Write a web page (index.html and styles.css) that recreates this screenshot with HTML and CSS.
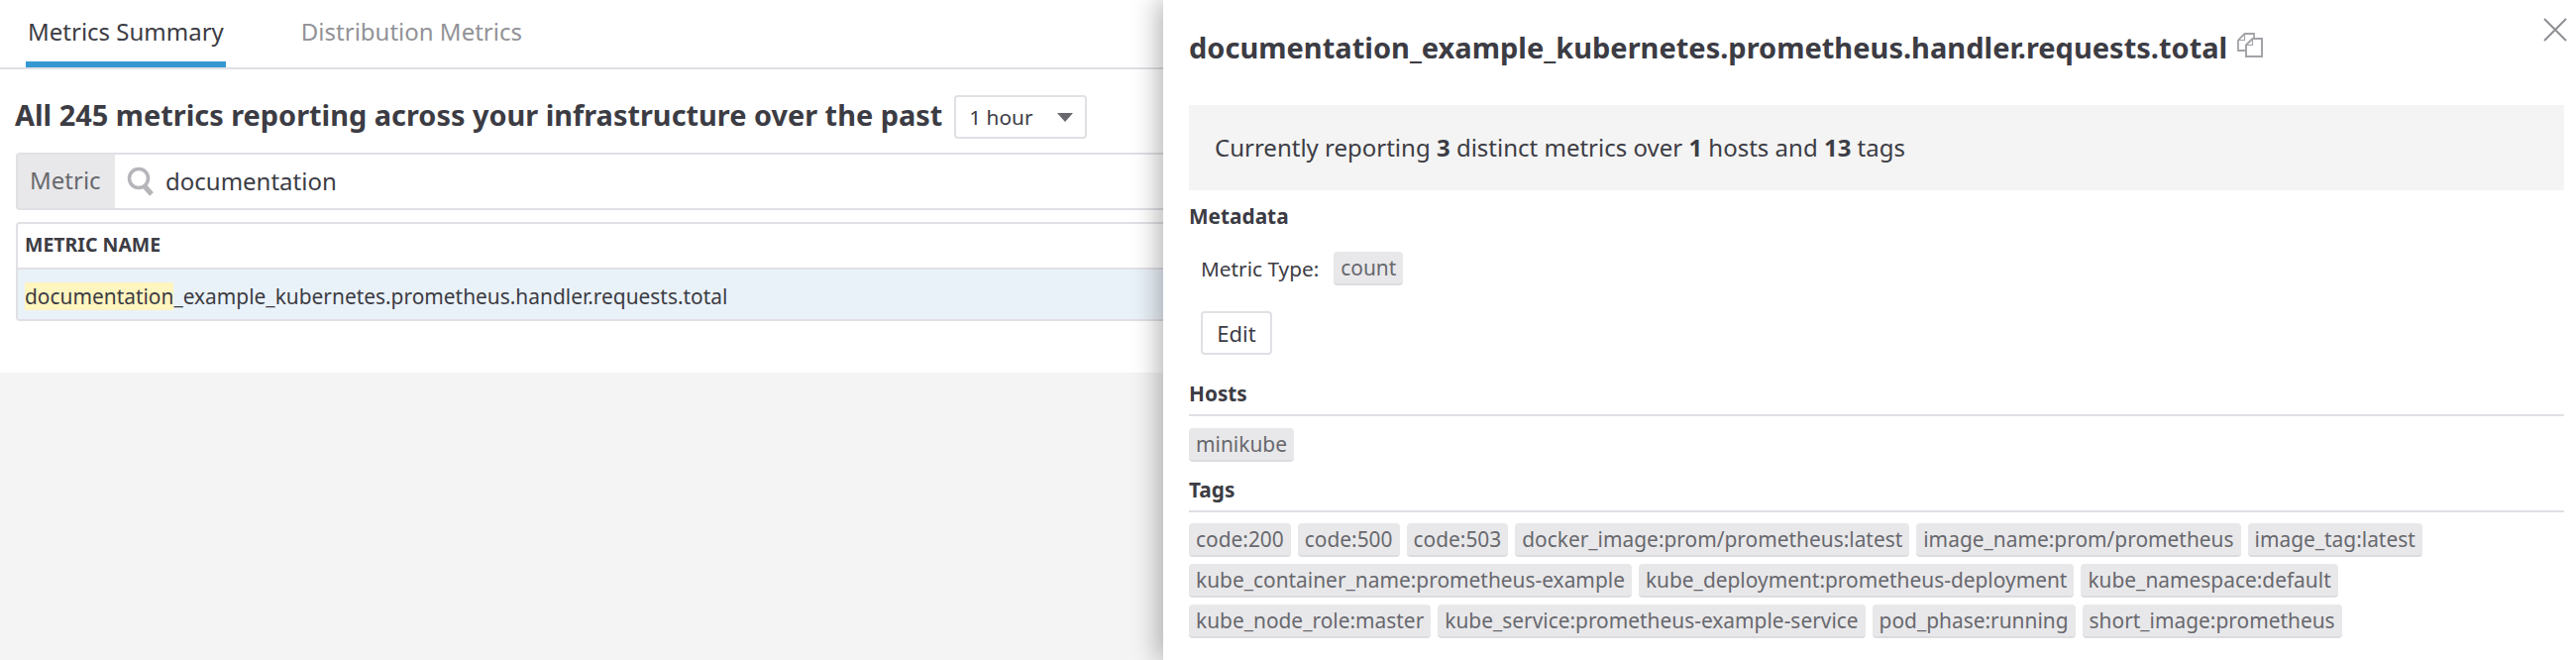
FILE: index.html
```html
<!DOCTYPE html>
<html lang="en">
<head>
  <meta charset="UTF-8" />
  <title>Metrics Summary</title>
  <link rel="stylesheet" href="styles.css">
</head>
<body>
  <div class="page">
    <div class="top">
      <div class="tabs">
        <div class="tab active">Metrics Summary</div>
        <div class="tab">Distribution Metrics</div>
      </div>

      <div class="headline">
        <h1>All 245 metrics reporting across your infrastructure over the past</h1>
        <div class="select">
          <span>1 hour</span>
          <i class="caret"></i>
        </div>
      </div>

      <div class="search">
        <div class="search-label">Metric</div>
        <div class="search-input">
          <svg class="search-icon" width="28" height="30" viewBox="0 0 28 30">
            <circle cx="12" cy="12" r="9.5" fill="none" stroke="#b5b5ba" stroke-width="3.5"/>
            <path d="M18 20l7 8" stroke="#b5b5ba" stroke-width="5" fill="none"/>
          </svg>
          <span>documentation</span>
        </div>
      </div>

      <div class="table">
        <div class="table-head">METRIC NAME</div>
        <div class="table-row"><mark>documentation</mark>_example_kubernetes.prometheus.handler.requests.total</div>
      </div>
    </div>
    <div class="rest"></div>
  </div>

  <aside class="panel">
    <svg class="close" width="24" height="24" viewBox="0 0 24 24">
      <path d="M1 1l22 22M23 1L1 23" stroke="#8f8f94" stroke-width="2" fill="none"/>
    </svg>

    <div class="panel-title">
      <h2>documentation_example_kubernetes.prometheus.handler.requests.total</h2>
      <svg class="copy" width="26" height="25" viewBox="0 0 26 25">
        <path d="M8.500 18H1V7.500L7.500 1H17v5" fill="none" stroke="#a3a3a8" stroke-width="1.800"/>
        <path d="M7.500 1v6.500H1" fill="none" stroke="#a3a3a8" stroke-width="1.200"/>
        <path d="M9 24V12.500L15.500 6H25v18z" fill="none" stroke="#a3a3a8" stroke-width="2"/>
        <path d="M15.500 6v6.500H9" fill="none" stroke="#a3a3a8" stroke-width="1.200"/>
      </svg>
    </div>

    <div class="summary">Currently reporting <b>3</b> distinct metrics over <b>1</b> hosts and <b>13</b> tags</div>

    <h3 class="meta-title">Metadata</h3>
    <div class="meta-row">
      <span>Metric Type:</span>
      <span class="chip">count</span>
    </div>
    <button class="edit">Edit</button>

    <h3 class="section hosts">Hosts</h3>
    <div class="chips">
      <span class="chip">minikube</span>
    </div>

    <h3 class="section tags">Tags</h3>
    <div class="chips tag-list">
      <span class="chip">code:200</span>
      <span class="chip">code:500</span>
      <span class="chip">code:503</span>
      <span class="chip">docker_image:prom/prometheus:latest</span>
      <span class="chip">image_name:prom/prometheus</span>
      <span class="chip">image_tag:latest</span>
      <span class="chip">kube_container_name:prometheus-example</span>
      <span class="chip">kube_deployment:prometheus-deployment</span>
      <span class="chip">kube_namespace:default</span>
      <span class="chip">kube_node_role:master</span>
      <span class="chip">kube_service:prometheus-example-service</span>
      <span class="chip">pod_phase:running</span>
      <span class="chip">short_image:prometheus</span>
    </div>
  </aside>
</body>
</html>
```

FILE: styles.css
```css
html, body {
  margin: 0;
  height: 666px;
  overflow: hidden;
}
body {
  position: relative;
  font-family: "Noto Sans", sans-serif;
  font-size: 24px;
  color: #3c3c44;
  background: #fff;
}
h1, h2, h3 {
  margin: 0;
  font-weight: 700;
}

/* page behind the panel */
.page {
  display: flex;
  flex-direction: column;
  height: 666px;
}
.top {
  height: 376px;
  box-sizing: border-box;
  background: #fff;
}
.rest {
  flex: 1;
  background: #f4f4f4;
}
.tabs {
  display: flex;
  height: 70px;
  box-sizing: border-box;
  border-bottom: 2px solid #e0e0e5;
  padding-left: 26px;
  gap: 74px;
}
.tab {
  height: 68px;
  box-sizing: border-box;
  padding: 14px 2px 0;
  color: #929297;
  line-height: 36px;
}
.tab.active {
  color: #3c3c44;
  border-bottom: 6px solid #3598d0;
}
.headline {
  display: flex;
  align-items: center;
  gap: 12px;
  margin: 26px 0 14px 15px;
}
.headline h1 {
  font-size: 28.900px;
  line-height: 40px;
  padding-bottom: 4px;
}
.select {
  width: 134px;
  height: 44px;
  box-sizing: border-box;
  border: 2px solid #e0e0e5;
  border-radius: 4px;
  padding: 0 12px 0 13px;
  display: flex;
  align-items: center;
  justify-content: space-between;
  font-size: 20.800px;
}
.caret {
  border-left: 8px solid transparent;
  border-right: 8px solid transparent;
  border-top: 9px solid #68686e;
}
.search {
  display: flex;
  height: 58px;
  margin: 0 0 12px 16px;
  box-sizing: border-box;
  border: 2px solid #e0e0e5;
  border-radius: 4px;
}
.search-label {
  width: 98px;
  box-sizing: border-box;
  background: #e8e8ea;
  color: #68686e;
  padding-left: 12px;
  line-height: 52px;
}
.search-input {
  flex: 1;
  display: flex;
  align-items: center;
  gap: 11px;
  padding-left: 12px;
  line-height: 50px;
}
.table {
  margin-left: 16px;
  height: 100px;
  box-sizing: border-box;
  border: 2px solid #e0e0e5;
  border-radius: 4px;
  font-size: 20.900px;
}
.table-head {
  height: 46px;
  box-sizing: border-box;
  border-bottom: 2px solid #e0e0e5;
  padding-left: 7px;
  font-size: 19.500px;
  font-weight: 700;
  line-height: 42px;
}
.table-row {
  height: 50px;
  padding-left: 7px;
  background: #eaf2f9;
  line-height: 54px;
}
mark {
  background: #fff5bf;
  color: inherit;
  display: inline-block;
  line-height: 28px;
}

/* side panel */
.panel {
  position: absolute;
  top: 0;
  left: 1174px;
  right: 0;
  height: 666px;
  box-sizing: border-box;
  padding: 0 12px 0 26px;
  background: #fff;
  box-shadow: -6px 0 24px rgba(0, 0, 0, 0.28);
}
.close {
  position: absolute;
  top: 18px;
  right: 9px;
}
.panel-title {
  display: flex;
  align-items: center;
  gap: 10px;
  height: 106px;
  padding-bottom: 12px;
  box-sizing: border-box;
}
.panel-title h2 {
  font-size: 29px;
}
.copy {
  margin-bottom: 4px;
}
.summary {
  height: 86px;
  box-sizing: border-box;
  padding-left: 26px;
  background: #f4f4f4;
  line-height: 85px;
}
.meta-title, .section {
  font-size: 20.800px;
  line-height: 30px;
}
.meta-title {
  margin-top: 11px;
}
.meta-row {
  display: flex;
  align-items: center;
  gap: 15px;
  margin: 21px 0 0 12px;
  font-size: 20.800px;
}
.chip {
  display: inline-block;
  height: 34px;
  box-sizing: border-box;
  padding: 0 7px;
  background: #e8e8ea;
  border-bottom: 2px solid #dcdce0;
  border-radius: 4px;
  color: #68686e;
  font-size: 20.900px;
  line-height: 32px;
  white-space: nowrap;
}
.edit {
  display: block;
  width: 72px;
  height: 44px;
  margin: 26px 0 0 12px;
  padding: 0;
  background: #fff;
  border: 2px solid #e0e0e5;
  border-radius: 4px;
  color: #3c3c44;
  font-family: inherit;
  font-size: 22px;
}
.section {
  height: 38px;
  box-sizing: border-box;
  border-bottom: 2px solid #e0e0e5;
}
.hosts {
  margin-top: 24px;
}
.tags {
  margin-top: 13px;
}
.chips {
  display: flex;
  flex-wrap: wrap;
  margin-top: 12px;
}
.tag-list {
  margin-top: 11px;
  gap: 7px;
}
```
